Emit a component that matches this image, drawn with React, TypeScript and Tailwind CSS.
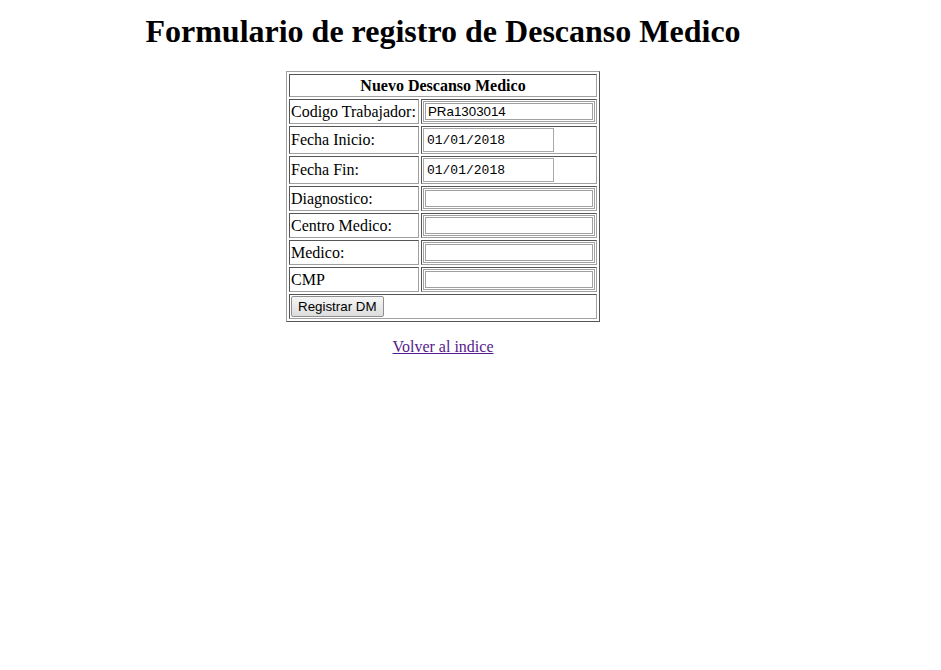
import React from "react";

const serif = "font-['Liberation_Serif','Times_New_Roman',serif]";

// cell border: inset look (dark top/left, light bottom/right)
const cell =
    "border border-t-[#555] border-l-[#555] border-b-[#a0a0a0] border-r-[#a0a0a0] p-px align-middle";

const textInput =
    "block w-full h-[21px] border-[3px] border-double border-[#a0a0a0] bg-white px-[2px] text-[13.33px] leading-[normal] font-['Liberation_Sans'] text-black outline-none";

const dateInput =
    "block w-[131px] h-[24px] border border-[#a9a9a9] bg-white pl-[3px] text-[13px] leading-[normal] font-['Liberation_Mono'] text-black outline-none";

function TextRow({ label, value = "" }: { label: string; value?: string }) {
    return (
        <tr>
            <td className={`${cell} h-[25px] w-[130px] whitespace-nowrap`}>{label}</td>
            <td className={`${cell} h-[25px] w-[177px]`}>
                <input type="text" readOnly defaultValue={value} className={textInput} />
            </td>
        </tr>
    );
}

function DateRow({ label, value }: { label: string; value: string }) {
    return (
        <tr>
            <td className={`${cell} h-[28px] w-[130px] whitespace-nowrap`}>{label}</td>
            <td className={`${cell} h-[28px] w-[177px]`}>
                <input type="text" readOnly defaultValue={value} className={dateInput} />
            </td>
        </tr>
    );
}

export default function App() {
    return (
        <div className={`w-[886px] bg-white text-black text-[16px] leading-[normal] ${serif}`}>
            <h1 className="mt-[13px] text-center text-[32px] leading-[37px] font-bold">
                Formulario de registro de Descanso Medico
            </h1>

            <table className="mx-auto mt-[21px] w-[314px] border-separate border-spacing-[2px] border border-t-[#a0a0a0] border-l-[#a0a0a0] border-b-[#555] border-r-[#555]">
                <tbody>
                    <tr>
                        <th colSpan={2} className={`${cell} h-[23px] text-center font-bold`}>
                            Nuevo Descanso Medico
                        </th>
                    </tr>
                    <TextRow label="Codigo Trabajador:" value="PRa1303014" />
                    <DateRow label="Fecha Inicio:" value="01/01/2018" />
                    <DateRow label="Fecha Fin:" value="01/01/2018" />
                    <TextRow label="Diagnostico:" />
                    <TextRow label="Centro Medico:" />
                    <TextRow label="Medico:" />
                    <TextRow label="CMP" />
                    <tr>
                        <td colSpan={2} className={`${cell} h-[25px]`}>
                            <button
                                type="button"
                                className="h-[21px] px-[6px] border border-[#8f8f8f] rounded-[2px] bg-gradient-to-b from-[#f6f6f6] to-[#dddddd] text-[13.33px] leading-none font-['Liberation_Sans'] text-black"
                            >
                                Registrar DM
                            </button>
                        </td>
                    </tr>
                </tbody>
            </table>

            <p className="mt-4 text-center">
                <a href="#" className="text-[#551a8b] underline">
                    Volver al indice
                </a>
            </p>
        </div>
    );
}
